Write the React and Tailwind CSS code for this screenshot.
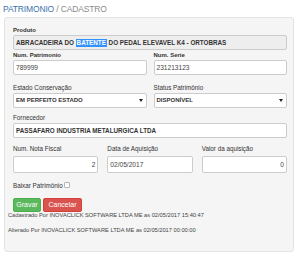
import React from "react";

const F = { fontFamily: '"Liberation Sans", Arial, sans-serif' };

function Label({ children, bold, className = "" }) {
  return (
    <div className={`leading-[6px] h-[6px] text-[#333] whitespace-nowrap ${bold ? "font-bold text-[6px]" : "text-[6.3px]"} ${className}`}>{children}</div>
  );
}

function Box({ children, className = "" }) {
  return (
    <div className={`border border-[#ccc] rounded-[2px] flex items-center px-[2px] whitespace-nowrap ${className}`}>
      {children}
    </div>
  );
}

function Arrow() {
  return (
    <svg width="4" height="3" viewBox="0 0 4 3" className="mr-[1px]">
      <path d="M0 0 L4 0 L2 3 Z" fill="#222" />
    </svg>
  );
}

export default function App() {
  return (
    <div className="w-[300px] h-[256px] bg-white overflow-hidden" style={F}>
      <div className="h-[17px] pl-[3px] pt-[4px] text-[8.5px] leading-[10px] tracking-[-0.15px] whitespace-nowrap">
        <span className="text-[#3b72ab]">PATRIMONIO</span>
        <span className="text-[#8a8a8a]"> / CADASTRO</span>
      </div>
      <div className="ml-[4px] w-[290px] h-[235px] bg-[#f5f5f5] border border-[#e3e3e3] rounded-[3px] pl-[8px] pr-[6px] pt-[9px]">
        <Label bold className="mb-[2px]">Produto</Label>
        <Box className="h-[15px] bg-[#eeeeee] font-bold text-[6.3px] text-[#333]">
          <span>ABRACADEIRA DO&nbsp;</span>
          <span className="bg-[#3392fe] text-white px-[1px] leading-[8px]">BATENTE</span>
          <span>&nbsp;DO PEDAL ELEVAVEL K4 - ORTOBRAS</span>
        </Box>
        <div className="grid grid-cols-2 gap-x-[7px] mt-[2px]">
          <div>
            <Label bold className="mb-[2px]">Num. Patrimonio</Label>
            <Box className="h-[15px] bg-white text-[6.6px] text-[#444]">789999</Box>
          </div>
          <div>
            <Label bold className="mb-[2px]">Num. Serie</Label>
            <Box className="h-[15px] bg-white text-[6.6px] text-[#444]">231213123</Box>
          </div>
        </div>
        <div className="grid grid-cols-2 gap-x-[7px] mt-[10px]">
          <div>
            <Label className="mb-[2px]">Estado Conservação</Label>
            <Box className="h-[15px] bg-white justify-between font-bold text-[6px] text-[#333]">
              <span>EM PERFEITO ESTADO</span>
              <Arrow />
            </Box>
          </div>
          <div>
            <Label className="mb-[2px]">Status Patrimônio</Label>
            <Box className="h-[15px] bg-white justify-between font-bold text-[6px] text-[#333]">
              <span>DISPONÍVEL</span>
              <Arrow />
            </Box>
          </div>
        </div>
        <div className="mt-[7px]">
          <Label className="mb-[2px]">Fornecedor</Label>
          <Box className="h-[15px] bg-white font-bold text-[6.3px] text-[#333]">PASSAFARO INDUSTRIA METALURGICA LTDA</Box>
        </div>
        <div className="grid grid-cols-3 gap-x-[9px] mt-[8px]">
          <div>
            <Label className="mb-[4px]">Num. Nota Fiscal</Label>
            <Box className="h-[17px] bg-white justify-end text-[6.6px] text-[#444]">2</Box>
          </div>
          <div>
            <Label className="mb-[4px]">Data de Aquisição</Label>
            <Box className="h-[17px] bg-white text-[6.6px] text-[#444]">02/05/2017</Box>
          </div>
          <div>
            <Label className="mb-[4px]">Valor da aquisição</Label>
            <Box className="h-[17px] bg-white justify-end text-[6.6px] text-[#444]">0</Box>
          </div>
        </div>
        <div className="mt-[10px] h-[6px] flex items-center gap-[1px] text-[6.3px] leading-[6px] text-[#333]">
          <span>Baixar Patrimônio</span>
          <span className="w-[6px] h-[6px] border border-[#b5b5b5] bg-white rounded-[1px] -mt-[2px]"></span>
        </div>
        <div className="flex gap-[2px] mt-[9px]">
          <div className="w-[28px] h-[14px] bg-[#5cb85c] border border-[#4cae4c] rounded-[2px] text-white text-[7px] flex items-center justify-center">Gravar</div>
          <div className="w-[39px] h-[14px] bg-[#d9534f] border border-[#d43f3a] rounded-[2px] text-white text-[7px] flex items-center justify-center">Cancelar</div>
        </div>
        <div className="-ml-[5px] h-[6px] leading-[6px] text-[5.7px] text-[#444] whitespace-nowrap">
          Cadastrado Por INOVACLICK SOFTWARE LTDA ME as 02/05/2017 15:40:47
        </div>
        <div className="-ml-[5px] mt-[9px] h-[6px] leading-[6px] text-[5.7px] text-[#444] whitespace-nowrap">
          Alterado Por INOVACLICK SOFTWARE LTDA ME as 02/05/2017 00:00:00
        </div>
      </div>
    </div>
  );
}
